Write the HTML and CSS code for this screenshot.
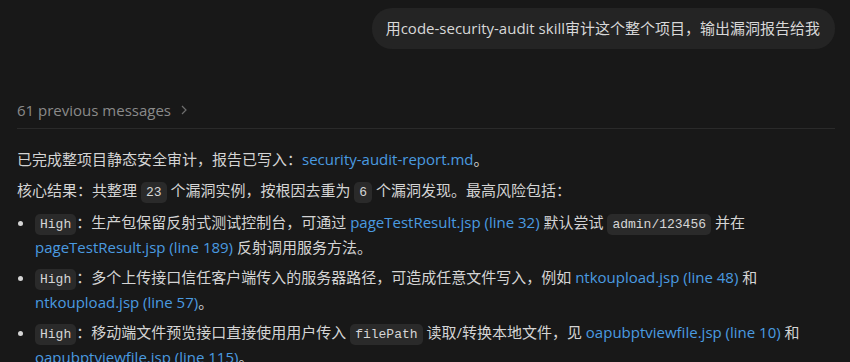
FILE: index.html
```html
<html>
<head>
	<title>Chat</title>
	<meta charset='UTF-8'>
	<link rel="stylesheet" href="styles.css">
</head>
<body>
	<div class='chat'>
		<div class='userRow'>
			<div class='bubble'>用code-security-audit skill审计这个整个项目，输出漏洞报告给我</div>
		</div>

		<div class='history'>
			<span>61 previous messages</span>
			<svg class='chev' width='10' height='12' viewBox='0 0 10 12'><path d='M3 2 L7 6 L3 10' fill='none' stroke='#6e6e6e' stroke-width='1.2'/></svg>
		</div>

		<div class='answer'>
			<p>已完成整项目静态安全审计，报告已写入：<a href='#'>security-audit-report.md</a>。</p>
			<p>核心结果：共整理 <code>23</code> 个漏洞实例，按根因去重为 <code>6</code> 个漏洞发现。最高风险包括：</p>
			<ul>
				<li><code>High</code>：生产包保留反射式测试控制台，可通过 <a href='#'>pageTestResult.jsp (line 32)</a> 默认尝试 <code>admin/123456</code> 并在 <a href='#'>pageTestResult.jsp (line 189)</a> 反射调用服务方法。</li>
				<li><code>High</code>：多个上传接口信任客户端传入的服务器路径，可造成任意文件写入，例如 <a href='#'>ntkoupload.jsp (line 48)</a> 和 <a href='#'>ntkoupload.jsp (line 57)</a>。</li>
				<li><code>High</code>：移动端文件预览接口直接使用用户传入 <code>filePath</code> 读取/转换本地文件，见 <a href='#'>oapubptviewfile.jsp (line 10)</a> 和 <a href='#'>oapubptviewfile.jsp (line 115)</a>。</li>
			</ul>
		</div>
	</div>
</body>
</html>
```

FILE: styles.css
```css
body {
	margin: 0;
	background-color: #181818;
	color: #d4d4d4;
	font-family: "Open Sans", "Noto Sans CJK SC", sans-serif;
	font-size: 15px;
}
.chat {
	padding: 8px 15px 0 17px;
}
.userRow {
	display: flex;
	justify-content: flex-end;
}
.bubble {
	background-color: #242424;
	border-radius: 20px;
	padding: 10px 15px 11px 14px;
	line-height: 20px;
	color: #d8d8d8;
}
.history {
	margin-top: 51px;
	padding-bottom: 8px;
	border-bottom: 1px solid #2a2a2a;
	color: #8a8a8a;
	display: flex;
	align-items: center;
	gap: 8px;
}
.answer {
	padding-top: 18px;
}
.answer p {
	margin: 0 0 7px 0;
	line-height: 24px;
}
.answer ul {
	margin: 0;
	padding-left: 18px;
}
.answer li {
	line-height: 24px;
	margin-bottom: 6px;
}
a {
	color: #4a9be0;
	text-decoration: none;
	white-space: nowrap;
}
code {
	display: inline-block;
	font-family: "Liberation Mono", "DejaVu Sans Mono", monospace;
	font-size: 13px;
	line-height: 21px;
	background-color: #2a2a2a;
	border-radius: 5px;
	padding: 0 5px;
	color: #d6d6d6;
	vertical-align: 0;
}
```
